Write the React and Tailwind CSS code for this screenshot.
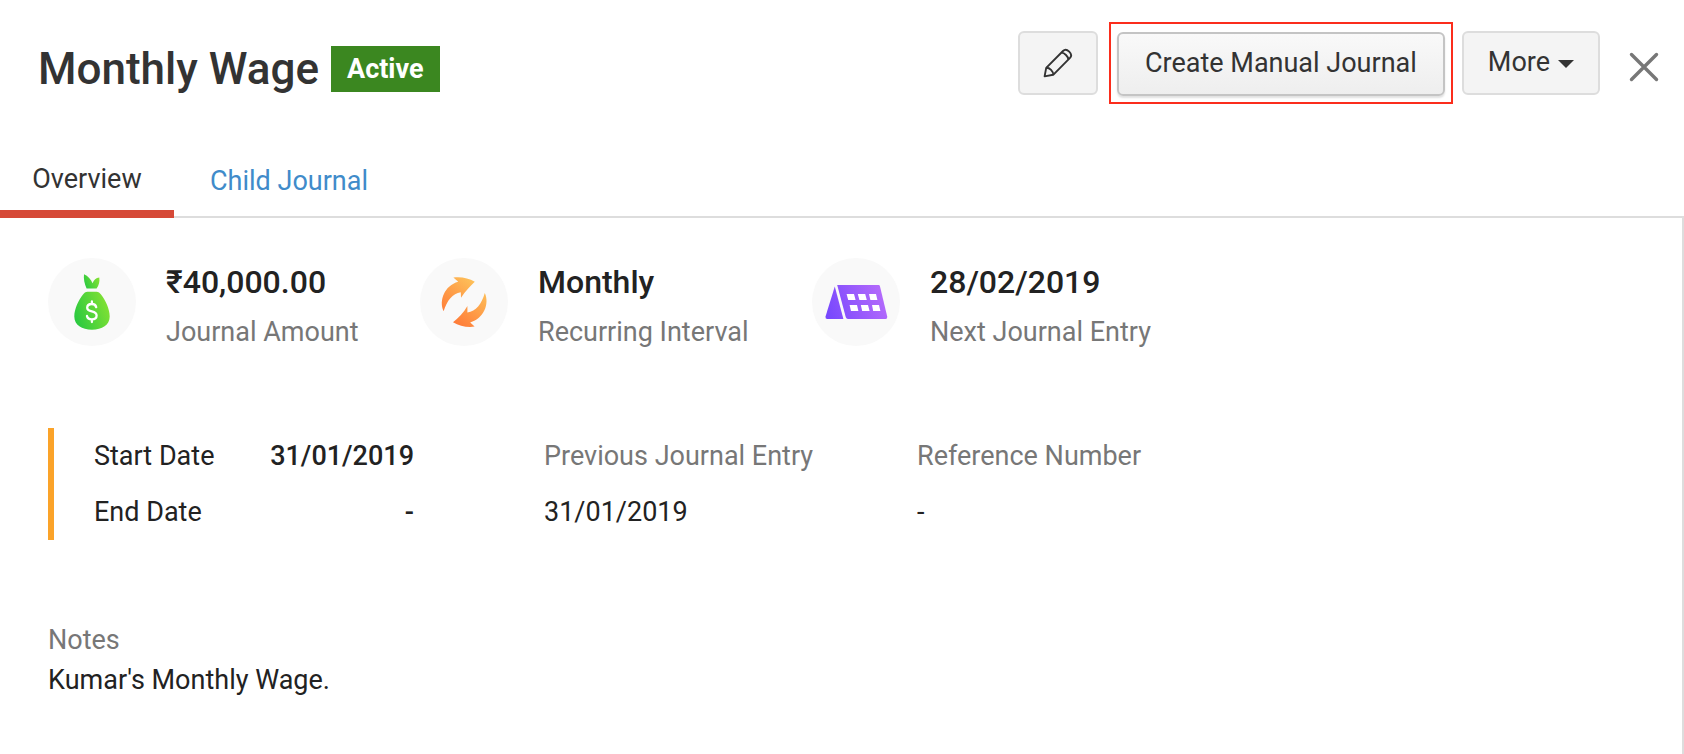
import React from "react";

function PencilIcon() {
  return (
    <svg width="30" height="30" viewBox="0 0 30 30" fill="none" stroke="#333" strokeWidth="1.9" strokeLinejoin="round" aria-hidden="true">
      <path d="M1.6 28.4 3.2 19.8 20 3 C21.6 1.4 24 1.5 26.2 3.6 28.4 5.8 28.6 8.2 27 9.8 L10.2 26.8 Z" />
      <path d="M3.2 19.8 C6.6 19.6 10.4 23.4 10.2 26.8" />
      <path d="M18.6 4.6 C21.4 4.8 25.2 8.4 25.4 11.4" />
    </svg>
  );
}

function CloseIcon() {
  return (
    <svg width="30" height="30" viewBox="0 0 30 30" fill="none" stroke="#777" strokeWidth="3.4" strokeLinecap="round" aria-hidden="true">
      <path d="M2.5 2.5 27.5 27.5 M27.5 2.5 2.5 27.5" />
    </svg>
  );
}

function MoneyBagIcon() {
  return (
    <svg width="88" height="88" viewBox="0 0 88 88" aria-hidden="true">
      <defs>
        <linearGradient id="bag" x1="0" y1="0.7" x2="1" y2="0.3">
          <stop offset="0" stopColor="#2ac940" />
          <stop offset="1" stopColor="#85e233" />
        </linearGradient>
      </defs>
      <path fill="url(#bag)" d="M38.6 30.5 C36.6 25.8 35.4 21 36 16.2 C40 17.8 43 21.5 44.6 25.2 C45.8 22 48 20 51.3 19.6 C51.9 23.8 51 27.4 48.6 30.5 Z" />
      <path fill="url(#bag)" d="M39.5 33.8 H48.5 C50.5 33.8 51.8 35 53 36.6 C57.5 42.4 61.7 51 61.7 58.6 C61.7 67.4 54 71.7 44 71.7 S26.3 67.4 26.3 58.6 C26.3 51 30.5 42.4 35 36.6 C36.2 35 37.5 33.8 39.5 33.8 Z" />
      <path fill="none" stroke="#fff" strokeWidth="2.3" strokeLinecap="round" strokeLinejoin="round" d="M48.2 49.2 C47.8 47.2 46.2 46 43.8 46 C41 46 39.2 47.6 39.2 49.8 C39.2 52 41 52.8 43.8 53.4 C46.8 54 48.6 55.2 48.6 57.6 C48.6 60 46.6 61.4 43.8 61.4 C41.2 61.4 39.4 60.2 39 58 M43.9 43.4 V46 M43.9 61.4 V64" />
    </svg>
  );
}

function RecurringIcon() {
  return (
    <svg width="88" height="88" viewBox="0 0 88 88" aria-hidden="true">
      <defs>
        <linearGradient id="cycle" gradientUnits="userSpaceOnUse" x1="28" y1="66" x2="62" y2="24">
          <stop offset="0" stopColor="#ff7435" />
          <stop offset="1" stopColor="#fdc75c" />
        </linearGradient>
      </defs>
      <g fill="url(#cycle)">
        <path d="M33.4 19.6 C41 18.6 48.5 20 54.8 23.8 C50 28.2 45.5 33.2 41 39.8 L40.8 34.2 C32.5 35.2 27 42.6 23.6 53.2 C18.6 42.6 24.6 27.6 38.2 23.8 Z" />
        <path d="M54.6 68.6 C47 69.6 39.3 68 33 64.2 C38 60 43.5 55 47.4 48 L47.4 54.4 C56 53.4 61.6 46 64.8 35 C69.8 45.8 63.8 60.6 50.2 64.4 Z" />
      </g>
    </svg>
  );
}

function CalendarIcon() {
  return (
    <svg width="88" height="88" viewBox="0 0 88 88" aria-hidden="true">
      <defs>
        <linearGradient id="calendar" gradientUnits="userSpaceOnUse" x1="14" y1="58" x2="74" y2="34">
          <stop offset="0" stopColor="#7647fd" />
          <stop offset="1" stopColor="#b76cfb" />
        </linearGradient>
      </defs>
      <path fill="url(#calendar)" d="M22.8 28.4 L31.4 61 H15 Q13 60.6 13.6 58.2 Z" />
      <path fill="url(#calendar)" d="M25.2 27 H66.6 Q67.6 27 67.9 28 L75.2 58.4 Q75.4 61 73 61 H36 Q34.4 61 33.8 59.2 Z" />
      <g fill="#fff">
        <path d="M34.6 36 H42 L43.6 42 H36.2 Z M45.8 36 H53.2 L54.8 42 H47.4 Z M57 36 H64 L65.4 42 H58.4 Z" />
        <path d="M37.6 47 H45 L46.4 53 H39 Z M48.8 47 H56 L57.6 53 H50.2 Z M60 47 H67 L68.4 53 H61.2 Z" />
      </g>
    </svg>
  );
}

function Stat({ icon, value, label }) {
  return (
    <div className="flex gap-[30px]">
      <div className="size-[88px] shrink-0 rounded-full bg-[#f9f9f9]">{icon}</div>
      <div className="pt-0.5 whitespace-nowrap">
        <p className="text-[32px] leading-[44px] font-medium">{value}</p>
        <p className="pt-2 text-[27px] leading-10 text-[#777]">{label}</p>
      </div>
    </div>
  );
}

function Field({ label, value }) {
  return (
    <div className="whitespace-nowrap">
      <dt className="text-[#777]">{label}</dt>
      <dd className="pt-4">{value}</dd>
    </div>
  );
}

export default function App() {
  return (
    <div className="flex min-h-screen flex-col bg-white font-['Roboto',sans-serif] text-[27px] leading-10 text-[#222]">
      <header className="flex items-start justify-between pt-[22px] pr-[25px] pl-[38px] whitespace-nowrap text-[#333]">
        <div className="flex items-center gap-3 pt-[19px]">
          <h1 className="text-[44px] leading-[56px] font-medium">Monthly Wage</h1>
          <span className="bg-[#3b8720] px-4 py-[3px] font-bold text-white">Active</span>
        </div>
        <div className="flex items-center">
          <button type="button" aria-label="Edit" className="flex h-16 w-20 items-center justify-center rounded-md border-2 border-[#ddd] bg-[#f4f4f4]">
            <PencilIcon />
          </button>
          <div className="ml-[11px] border-2 border-[#fb2d1c] px-[6px] pt-2 pb-1.5">
            <button type="button" className="block h-16 rounded-md border-2 border-[#c4c4c4] bg-linear-to-b from-[#f9f9f9] to-[#eee] px-[26px] pb-0.5 shadow-[0_2px_2px_rgba(0,0,0,0.12)]">
              Create Manual Journal
            </button>
          </div>
          <button type="button" className="ml-[9px] flex h-16 items-center gap-2 rounded-md border-2 border-[#ddd] bg-[#f4f4f4] px-6 pb-0.5">
            More
            <svg width="16" height="8" viewBox="0 0 16 8" className="mt-1" aria-hidden="true">
              <path d="M0 0H16L8 8Z" fill="#333" />
            </svg>
          </button>
          <button type="button" aria-label="Close" className="ml-[29px] pt-2">
            <CloseIcon />
          </button>
        </div>
      </header>

      <nav className="mt-[42px] flex h-[72px] border-b-2 border-[#ddd]">
        <a href="#overview" className="-mb-0.5 flex w-[174px] justify-center border-b-8 border-[#d64937] pt-[13px] text-[#333]">
          Overview
        </a>
        <a href="#child-journal" className="ml-9 pt-[15px] text-[#408bca]">
          Child Journal
        </a>
      </nav>

      <main className="flex-1 border-r-2 border-[#ddd] px-12 pt-10">
        <section className="grid grid-cols-[372px_392px_auto]">
          <Stat icon={<MoneyBagIcon />} value="₹40,000.00" label="Journal Amount" />
          <Stat icon={<RecurringIcon />} value="Monthly" label="Recurring Interval" />
          <Stat icon={<CalendarIcon />} value="28/02/2019" label="Next Journal Entry" />
        </section>

        <section className="mt-[76px] grid grid-cols-[496px_373px_auto]">
          <dl className="grid w-[366px] grid-cols-[auto_auto] justify-between gap-y-4 border-l-6 border-[#fba329] py-2 pl-10 whitespace-nowrap">
            <dt>Start Date</dt>
            <dd className="text-right font-medium">31/01/2019</dd>
            <dt>End Date</dt>
            <dd className="text-right font-medium">-</dd>
          </dl>
          <dl className="py-2">
            <Field label="Previous Journal Entry" value="31/01/2019" />
          </dl>
          <dl className="py-2">
            <Field label="Reference Number" value="-" />
          </dl>
        </section>

        <section className="mt-20 pb-8">
          <h2 className="text-[#777]">Notes</h2>
          <p>Kumar's Monthly Wage.</p>
        </section>
      </main>
    </div>
  );
}
